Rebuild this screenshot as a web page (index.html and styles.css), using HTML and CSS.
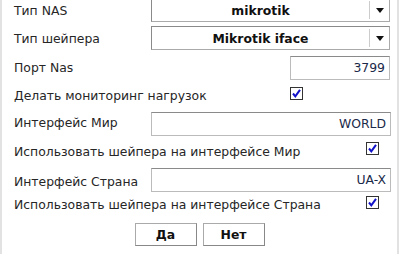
FILE: index.html
```html
<!DOCTYPE html>
<html>
<head>
<meta charset="utf-8">
<link rel="stylesheet" href="styles.css">
</head>
<body>
<div class="frame">
  <div class="form">
    <div class="row r-nas">
      <span class="lbl">Тип NAS</span>
      <div class="select"><span class="val">mikrotik</span><span class="drop"><svg width="8" height="5" viewBox="0 0 8 5"><path d="M0 0H8L4 5Z" fill="#111"/></svg></span></div>
    </div>
    <div class="row r-shaper">
      <span class="lbl">Тип шейпера</span>
      <div class="select"><span class="val">Mikrotik iface</span><span class="drop"><svg width="8" height="5" viewBox="0 0 8 5"><path d="M0 0H8L4 5Z" fill="#111"/></svg></span></div>
    </div>
    <div class="row r-port">
      <span class="lbl">Порт Nas</span>
      <div class="ctl ctl-end"><div class="input short">3799</div></div>
    </div>
    <div class="row r-chk r-mon">
      <span class="lbl lbl-mon">Делать мониторинг нагрузок</span>
      <span class="chk"><svg width="13" height="13" viewBox="0 0 13 13"><rect x="0.5" y="0.5" width="12" height="12" fill="#fff" stroke="#333"/><path d="M3 6.5L5.3 9.3L10 2.8" fill="none" stroke="#1212c8" stroke-width="2"/></svg></span>
    </div>
    <div class="row r-world">
      <span class="lbl">Интерфейс Мир</span>
      <div class="ctl"><div class="input wide">WORLD</div></div>
    </div>
    <div class="row r-chk r-use-world">
      <span class="lbl lbl-use">Использовать шейпера на интерфейсе Мир</span>
      <span class="chk"><svg width="13" height="13" viewBox="0 0 13 13"><rect x="0.5" y="0.5" width="12" height="12" fill="#fff" stroke="#333"/><path d="M3 6.5L5.3 9.3L10 2.8" fill="none" stroke="#1212c8" stroke-width="2"/></svg></span>
    </div>
    <div class="row r-country">
      <span class="lbl">Интерфейс Страна</span>
      <div class="ctl"><div class="input wide">UA-X</div></div>
    </div>
    <div class="row r-chk r-use-country">
      <span class="lbl lbl-use">Использовать шейпера на интерфейсе Страна</span>
      <span class="chk"><svg width="13" height="13" viewBox="0 0 13 13"><rect x="0.5" y="0.5" width="12" height="12" fill="#fff" stroke="#333"/><path d="M3 6.5L5.3 9.3L10 2.8" fill="none" stroke="#1212c8" stroke-width="2"/></svg></span>
    </div>
    <div class="buttons">
      <button class="btn">Да</button>
      <button class="btn">Нет</button>
    </div>
  </div>
</div>
</body>
</html>
```

FILE: styles.css
```css
html, body {
  margin: 0;
  padding: 0;
  background: #fff;
}
body {
  font-family: "DejaVu Sans", Verdana, sans-serif;
  font-size: 12.4px;
  color: #262626;
  overflow: hidden;
}
.frame {
  width: 399px;
  height: 254px;
  box-sizing: border-box;
  border-left: 2px solid #e2e2e2;
  border-right: 2px solid #e2e2e2;
  overflow: hidden;
}
.form {
  padding-left: 12px;
}
.row {
  display: flex;
  align-items: center;
  height: 24px;
}
.lbl {
  width: 137px;
  flex: none;
  white-space: nowrap;
  line-height: 13px;
}
.r-nas { margin-top: -2px; }
.r-nas .lbl { margin-top: 1px; }
.r-shaper { margin-top: 4px; }
.r-shaper .lbl { margin-top: 0; }
.r-port { margin-top: 6px; }
.r-port .lbl { margin-bottom: 1px; }
.r-chk { height: 13px; }
.r-mon { margin-top: 7px; }
.r-mon .lbl { margin-top: 4px; }
.r-world { margin-top: 12px; }
.r-world .lbl { margin-bottom: 3px; }
.r-use-world { margin-top: 6px; }
.r-use-world .lbl { margin-top: 6px; }
.r-country { margin-top: 13px; }
.r-country .lbl { margin-top: 2px; }
.r-use-country { margin-top: 4px; }
.r-use-country .lbl { margin-top: 4px; }
.lbl-mon { width: 276px; }
.lbl-use { width: 352px; }
.select {
  width: 239px;
  height: 24px;
  box-sizing: border-box;
  border: 1px solid #aaa;
  border-top-color: #8a8a8a;
  border-left-color: #8a8a8a;
  display: flex;
  align-items: center;
  background: #fff;
}
.val {
  flex: 1;
  text-align: center;
  font-weight: bold;
  color: #111;
}
.drop {
  width: 19px;
  height: 18px;
  border-left: 1px solid #ccc;
  display: flex;
  align-items: center;
  justify-content: center;
}
.ctl {
  width: 240px;
  display: flex;
}
.ctl-end { justify-content: flex-end; width: 239px; }
.input {
  height: 24px;
  box-sizing: border-box;
  border: 1px solid #bbb;
  border-top-color: #8a8a8a;
  padding: 0 4px;
  text-align: right;
  line-height: 22px;
  color: #1b2a4a;
}
.input.short { width: 100px; }
.input.wide { width: 240px; }
.chk {
  display: flex;
  flex: none;
  width: 13px;
  height: 13px;
}
.buttons {
  display: flex;
  justify-content: center;
  gap: 6px;
  margin-top: 14px;
  margin-left: -12px;
}
.btn {
  width: 62px;
  height: 23px;
  background: #fff;
  border: 1px solid #aaa;
  border-bottom-color: #888;
  border-right-color: #888;
  font-family: "DejaVu Sans", Verdana, sans-serif;
  font-size: 12.4px;
  font-weight: bold;
  color: #111;
  padding: 0;
}
```
